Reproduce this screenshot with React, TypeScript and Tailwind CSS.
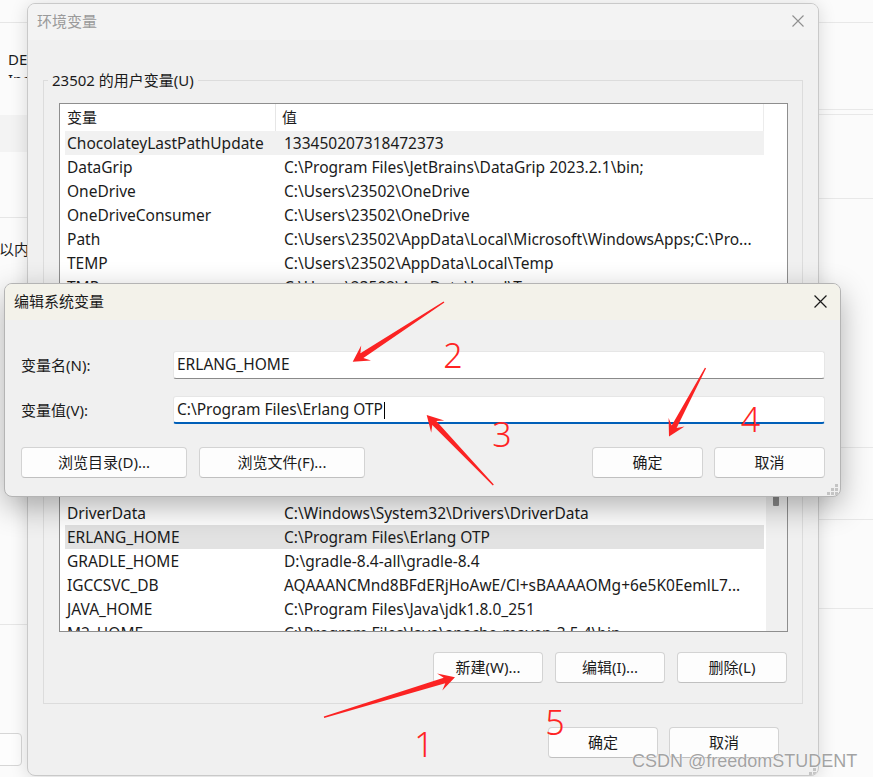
import React from "react";

type Row = { name: string; value: string; tone?: "hover" | "sel" };

const topRows: Row[] = [
  { name: "ChocolateyLastPathUpdate", value: "133450207318472373", tone: "hover" },
  { name: "DataGrip", value: "C:\\Program Files\\JetBrains\\DataGrip 2023.2.1\\bin;" },
  { name: "OneDrive", value: "C:\\Users\\23502\\OneDrive" },
  { name: "OneDriveConsumer", value: "C:\\Users\\23502\\OneDrive" },
  { name: "Path", value: "C:\\Users\\23502\\AppData\\Local\\Microsoft\\WindowsApps;C:\\Pro..." },
  { name: "TEMP", value: "C:\\Users\\23502\\AppData\\Local\\Temp" },
  { name: "TMP", value: "C:\\Users\\23502\\AppData\\Local\\Temp" },
];

const bottomRows: Row[] = [
  { name: "DriverData", value: "C:\\Windows\\System32\\Drivers\\DriverData" },
  { name: "ERLANG_HOME", value: "C:\\Program Files\\Erlang OTP", tone: "sel" },
  { name: "GRADLE_HOME", value: "D:\\gradle-8.4-all\\gradle-8.4" },
  { name: "IGCCSVC_DB", value: "AQAAANCMnd8BFdERjHoAwE/Cl+sBAAAAOMg+6e5K0EemlL7..." },
  { name: "JAVA_HOME", value: "C:\\Program Files\\Java\\jdk1.8.0_251" },
  { name: "M2_HOME", value: "C:\\Program Files\\Java\\apache-maven-3.5.4\\bin" },
];

function ListRow({ row }: { row: Row }) {
  const tone =
    row.tone === "hover" ? "bg-[#f1f1f1]" : row.tone === "sel" ? "bg-[#e2e2e2]" : "";
  return (
    <div className={`ml-[5px] mr-[2px] flex h-[24px] shrink-0 items-center pt-[2px] text-[15.5px] ${tone}`}>
      <div className="w-[217px] shrink-0 overflow-hidden whitespace-nowrap pl-[2px]">{row.name}</div>
      <div className="min-w-0 flex-1 overflow-hidden whitespace-nowrap pl-[2px]">{row.value}</div>
    </div>
  );
}

function CloseX({ color, size }: { color: string; size: number }) {
  return (
    <svg width={size} height={size} viewBox="0 0 12 12" fill="none">
      <path d="M0.5 0.5 L11.5 11.5 M11.5 0.5 L0.5 11.5" stroke={color} strokeWidth="1.1" />
    </svg>
  );
}

function Grip() {
  const dots = [
    [8, 0],
    [4, 4],
    [8, 4],
    [0, 8],
    [4, 8],
    [8, 8],
  ];
  return (
    <svg width="11" height="11" viewBox="0 0 11 11">
      {dots.map(([x, y]) => (
        <rect key={`${x}-${y}`} x={x} y={y} width="3" height="3" fill="#c4c4c4" />
      ))}
    </svg>
  );
}

function Btn({ children, className = "" }: { children: React.ReactNode; className?: string }) {
  return (
    <div
      className={`flex h-[31px] shrink-0 items-center justify-center rounded-[4px] border border-[#d3d3d3] border-b-[#c0c0c0] bg-[#fdfdfd] text-[15px] text-[#1b1b1b] ${className}`}
    >
      {children}
    </div>
  );
}

function arrowPoints(tx: number, ty: number, hx: number, hy: number) {
  const dx = hx - tx;
  const dy = hy - ty;
  const L = Math.hypot(dx, dy);
  const ux = dx / L;
  const uy = dy / L;
  const px = -uy;
  const py = ux;
  const p = (back: number, side: number) =>
    `${(hx - ux * back + px * side).toFixed(1)},${(hy - uy * back + py * side).toFixed(1)}`;
  const t = (side: number) => `${(tx + px * side).toFixed(1)},${(ty + py * side).toFixed(1)}`;
  return [t(0.7), p(11, 2.8), p(16, 9), `${hx},${hy}`, p(16, -9), p(11, -2.8), t(-0.7)].join(" ");
}

const arrows = [
  [444, 302, 352.7, 361.7],
  [493.3, 485, 426.7, 415],
  [705.5, 368, 669, 436.5],
  [324, 717.3, 455, 677.3],
];

const numbers = [
  { t: "2", x: 453, y: 368 },
  { t: "3", x: 502, y: 447 },
  { t: "4", x: 750.5, y: 432 },
  { t: "1", x: 424, y: 757 },
  { t: "5", x: 555, y: 735 },
];

export default function App() {
  return (
    <div className="relative h-[777px] w-[873px] overflow-hidden bg-[#fafafa] font-['Noto_Sans','Noto_Sans_CJK_SC',sans-serif] text-[15px] text-[#1b1b1b]">
      {/* Background window */}
      <div className="flex h-full w-full">
        <div className="flex w-[60px] shrink-0 flex-col bg-[#fbfbfb]">
          <div className="h-[23px] shrink-0 border-b border-[#e6e6e6]" />
          <div className="h-[55px] shrink-0 overflow-hidden pl-[8px] pt-[26px] leading-[20px]">
            <div>DE</div>
            <div>Inc</div>
          </div>
          <div className="h-[37px] shrink-0" />
          <div className="h-[37px] shrink-0 bg-[#f3f3f3]" />
          <div className="h-[66px] shrink-0 border-b border-[#e6e6e6]" />
          <div className="h-[407px] shrink-0 overflow-hidden whitespace-nowrap border-b border-[#e6e6e6] pl-0 pt-[21px] leading-[20px]">
            <span className="ml-[-1px]">以内存</span>
          </div>
          <div className="h-[108px] shrink-0" />
          <div className="ml-[-12px] h-[33px] w-[34px] shrink-0 rounded-[4px] border border-[#d6d6d6] bg-[#fdfdfd]" />
        </div>
        <div className="flex-1 bg-[#fbfbfb]" />
        <div className="flex w-[80px] shrink-0 flex-col bg-[#fbfbfb]">
          <div className="h-[23px] shrink-0 border-b border-[#e8e8e8]" />
          <div className="h-[87px] shrink-0 border-b border-[#e8e8e8]" />
          <div className="h-[5px] shrink-0 border-b border-[#e8e8e8]" />
          <div className="h-[84px] shrink-0 border-b border-[#e8e8e8]" />
          <div className="h-[249px] shrink-0 border-b border-[#e8e8e8]" />
          <div className="h-[72px] shrink-0 border-b border-[#e8e8e8]" />
          <div className="h-[89px] shrink-0 border-b border-[#e8e8e8]" />
        </div>
      </div>

      {/* 环境变量 dialog */}
      <div className="absolute left-[27px] top-[3px] flex h-[773px] w-[792px] flex-col overflow-hidden rounded-[8px] border border-[#c9c9c9] bg-[#f0f0f0] shadow-[0_2px_18px_rgba(0,0,0,0.14)]">
        <div className="flex h-[36px] shrink-0 items-center justify-between bg-[#f3f3f3] pb-[3px] pl-[9px] pr-[14px]">
          <span className="leading-[20px] text-[#9a9a9a]">环境变量</span>
          <CloseX color="#8f8f8f" size={12} />
        </div>
        <div className="flex flex-col pt-[30px]">
          <fieldset className="mx-[15px] border border-[#dcdcdc]">
            <legend className="ml-[4px] px-[4px] leading-[20px]">23502 的用户变量(U)</legend>
            <div className="flex flex-col pb-[20px] pl-[15px] pr-[14px]">
              <div className="mt-[13px] flex h-[529px] border border-[#8e8e8e] bg-white">
                <div className="flex min-w-0 flex-1 flex-col overflow-hidden">
                  <div className="ml-[5px] mr-[2px] flex h-[27px] shrink-0 items-center border-r border-[#ececec]">
                    <div className="w-[210px] shrink-0 pl-[2px]">变量</div>
                    <div className="h-full w-px bg-[#e6e6e6]" />
                    <div className="pl-[6px]">值</div>
                  </div>
                  {topRows.map((r) => (
                    <ListRow key={r.name} row={r} />
                  ))}
                  <div className="h-[202px] shrink-0" />
                  {bottomRows.map((r) => (
                    <ListRow key={r.name} row={r} />
                  ))}
                </div>
                <div className="flex w-[21px] shrink-0 flex-col">
                  <div className="h-[186px] shrink-0 bg-white" />
                  <div className="flex-1 bg-[#f0f0f0] pl-[7px] pt-[110px]">
                    <div className="h-[106px] w-[6px] rounded-[1px] bg-[#8a8a8a]" />
                  </div>
                </div>
              </div>
              <div className="mr-[1px] mt-[20px] flex justify-end gap-[12px]">
                <Btn className="w-[110px]">新建(W)...</Btn>
                <Btn className="w-[110px]">编辑(I)...</Btn>
                <Btn className="w-[110px]">删除(L)</Btn>
              </div>
            </div>
          </fieldset>
          <div className="mt-[23px] flex justify-end gap-[11px] pr-[39px]">
            <Btn className="w-[110px]">确定</Btn>
            <Btn className="w-[110px]">取消</Btn>
          </div>
        </div>
        <div className="absolute bottom-[-4px] right-[2px]">
          <Grip />
        </div>
      </div>

      {/* 编辑系统变量 dialog */}
      <div className="absolute left-[4px] top-[283px] flex h-[214px] w-[837px] flex-col overflow-hidden rounded-[8px] border border-[#b4b4b4] bg-[#f0f0f0] shadow-[0_10px_30px_rgba(0,0,0,0.3)]">
        <div className="flex h-[36px] shrink-0 items-center justify-between bg-[#f3f2ea] pb-[2px] pl-[9px] pr-[13px]">
          <span className="leading-[20px]">编辑系统变量</span>
          <CloseX color="#1a1a1a" size={13} />
        </div>
        <div className="flex flex-col pl-[16px] pr-[15px] pt-[31px]">
          <div className="grid grid-cols-[152px_1fr] items-center gap-y-[17px]">
            <div>变量名(N):</div>
            <div className="flex h-[28px] items-center rounded-[3px] border border-[#e6e6e6] border-b-[#8a8a8a] bg-white pl-[3px] text-[15.5px]">
              ERLANG_HOME
            </div>
            <div>变量值(V):</div>
            <div className="flex h-[28px] items-center rounded-[3px] border border-[#e6e6e6] border-b-2 border-b-[#005fb8] bg-white pl-[3px] pt-[1px] text-[15.5px]">
              <span>C:\Program Files\Erlang OTP</span>
              <span className="ml-[1px] inline-block h-[17px] w-px bg-black" />
            </div>
          </div>
          <div className="mt-[23px] flex gap-[12px]">
            <Btn className="w-[166px]">浏览目录(D)...</Btn>
            <Btn className="w-[166px]">浏览文件(F)...</Btn>
            <div className="ml-auto flex gap-[11px]">
              <Btn className="w-[111px] border-[#005fb8] border-b-[#005fb8]">确定</Btn>
              <Btn className="w-[111px]">取消</Btn>
            </div>
          </div>
        </div>
        <div className="absolute bottom-[1px] right-[2px]">
          <Grip />
        </div>
      </div>

      {/* Annotations */}
      <svg className="pointer-events-none absolute left-0 top-0" width="873" height="777" viewBox="0 0 873 777">
        {arrows.map(([a, b, c, d]) => (
          <polygon key={`${a}-${b}`} points={arrowPoints(a, b, c, d)} fill="#fb2323" />
        ))}
        {numbers.map((n) => (
          <text
            key={n.t}
            x={n.x}
            y={n.y}
            textAnchor="middle"
            fontSize="34"
            fontWeight="300"
            fill="#ff2424"
            fontFamily="'Noto Sans', sans-serif"
          >
            {n.t}
          </text>
        ))}
      </svg>

      <div className="pointer-events-none absolute left-[632px] top-[750px] whitespace-nowrap font-['Liberation_Sans',Arial,sans-serif] text-[18px] leading-[22px] text-[#a3a3a3] [text-shadow:0_0_1px_#ffffff,0_0_1px_#ffffff]">
        CSDN @freedomSTUDENT
      </div>
    </div>
  );
}
